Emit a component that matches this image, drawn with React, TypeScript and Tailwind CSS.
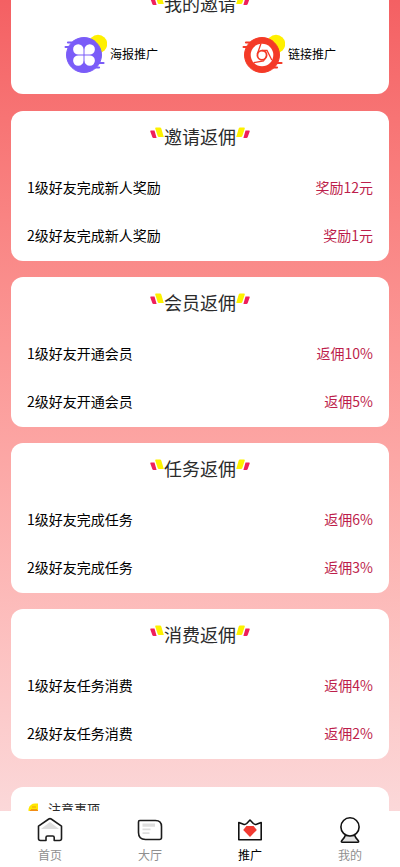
import type { ReactNode } from "react";

type Rate = { label: string; value: string };

const sections: { title: string; rates: Rate[] }[] = [
  {
    title: "邀请返佣",
    rates: [
      { label: "1级好友完成新人奖励", value: "奖励12元" },
      { label: "2级好友完成新人奖励", value: "奖励1元" },
    ],
  },
  {
    title: "会员返佣",
    rates: [
      { label: "1级好友开通会员", value: "返佣10%" },
      { label: "2级好友开通会员", value: "返佣5%" },
    ],
  },
  {
    title: "任务返佣",
    rates: [
      { label: "1级好友完成任务", value: "返佣6%" },
      { label: "2级好友完成任务", value: "返佣3%" },
    ],
  },
  {
    title: "消费返佣",
    rates: [
      { label: "1级好友任务消费", value: "返佣4%" },
      { label: "2级好友任务消费", value: "返佣2%" },
    ],
  },
];

function LeftMark() {
  return (
    <svg width="14" height="20" viewBox="0 0 14 20" aria-hidden="true">
      <path d="M1 4.5H4.5L6.6 12H3.6Q2.6 12 2.3 11L.3 5.5Q0 4.5 1 4.5Z" fill="#ef1f5c" />
      <path d="M6 1.5H10Q11 1.5 11.3 2.5L13.8 11H9Q8 11 7.7 10L5.2 2.5Q5 1.5 6 1.5Z" fill="#fdf100" />
    </svg>
  );
}

function RightMark() {
  return (
    <svg width="14" height="20" viewBox="0 0 14 20" aria-hidden="true">
      <path d="M13 4.5H9.5L7.4 12H10.4Q11.4 12 11.7 11L13.7 5.5Q14 4.5 13 4.5Z" fill="#ef1f5c" />
      <path d="M8 1.5H4Q3 1.5 2.7 2.5L.2 11H5Q6 11 6.3 10L8.8 2.5Q9 1.5 8 1.5Z" fill="#fdf100" />
    </svg>
  );
}

function CardTitle({ children }: { children: string }) {
  return (
    <div className="flex h-[52px] items-center justify-center pb-0.5">
      <LeftMark />
      <h2 className="text-[18px] leading-5 text-[#2b2b2b]">{children}</h2>
      <RightMark />
    </div>
  );
}

function SpeedLines() {
  return (
    <>
      <path d="M4 8.5H12M1.6 13H10" strokeWidth="2.2" strokeLinecap="round" />
      <path d="M31 29H39.5M29 33.5H35" strokeWidth="2.2" strokeLinecap="round" />
    </>
  );
}

function PosterIcon() {
  return (
    <svg width="43" height="40" viewBox="0 0 43 40" aria-hidden="true">
      <circle cx="34" cy="10" r="9.2" fill="#fff000" />
      <g fill="#7a5cf8" stroke="#7a5cf8">
        <circle cx="20" cy="21" r="17.5" />
        <SpeedLines />
      </g>
      <g fill="#fff">
        <path d="M19.5 20.5H15A5.2 5.2 0 1 1 19.5 15.5Z" />
        <path d="M20.5 20.5H25A5.2 5.2 0 1 0 20.5 15.5Z" />
        <path d="M19.5 21.5H15A5.2 5.2 0 1 0 19.5 26.5Z" />
        <path d="M20.5 21.5H25A5.2 5.2 0 1 1 20.5 26.5Z" />
      </g>
    </svg>
  );
}

function LinkIcon() {
  return (
    <svg width="43" height="40" viewBox="0 0 43 40" aria-hidden="true">
      <circle cx="34" cy="10" r="9.2" fill="#fff000" />
      <g fill="#f43a27" stroke="#f43a27">
        <circle cx="20" cy="21" r="17.5" />
        <SpeedLines />
      </g>
      <circle cx="20" cy="21" r="11.3" fill="#fff" />
      <g fill="none" stroke="#f43a27">
        <circle cx="20" cy="21.2" r="4.6" strokeWidth="1.8" />
        <path d="M19 9.5L15.3 20M20 16.5H25L29.8 26M11.8 28.6L21.5 27L24.3 22.5" strokeWidth="1.3" />
      </g>
    </svg>
  );
}

function HomeIcon() {
  return (
    <svg width="26" height="26" viewBox="0 0 26 26" fill="none" aria-hidden="true">
      <path d="M4 12L13 5L22 12Z" fill="#dedede" />
      <path
        d="M1.5 9.2L11.8 2Q13 1.2 14.2 2L24.5 9.2V21.5Q24.5 23.5 22.5 23.5H17.2V20.5Q17.2 19 15.7 19H10.5Q9 19 9 20.5V23.5H3.5Q1.5 23.5 1.5 21.5Z"
        stroke="#1c1c1c"
        strokeWidth="1.6"
        strokeLinejoin="round"
      />
    </svg>
  );
}

function HallIcon() {
  return (
    <svg width="26" height="26" viewBox="0 0 26 26" fill="none" aria-hidden="true">
      <path d="M5.5 6.5H18V9.7H5.5ZM5.5 11.5H13.5V13.3H5.5ZM5.5 15.3H12.5V17.1H5.5Z" fill="#dedede" />
      <path
        d="M2.8 3.5H18.5Q24.5 3.5 24.5 9.5V20.5Q24.5 22.5 22.5 22.5H8.5Q1.5 22.5 1.5 15.5V5Q1.5 3.5 2.8 3.5Z"
        stroke="#1c1c1c"
        strokeWidth="1.6"
      />
    </svg>
  );
}

function PromoteIcon() {
  return (
    <svg width="26" height="26" viewBox="0 0 26 26" fill="none" aria-hidden="true">
      <path
        d="M1.8 22.8V5.5L6.5 7.3Q8.3 7.8 9.7 6.5L13 3L16.3 6.5Q17.7 7.8 19.5 7.3L24.2 5.5V22.8Z"
        stroke="#111"
        strokeWidth="1.6"
        strokeLinejoin="round"
      />
      <path d="M9.4 9H16.6L19.8 13L13 20L6.2 13Z" fill="#f13a32" />
    </svg>
  );
}

function MineIcon() {
  return (
    <svg width="26" height="26" viewBox="0 0 26 26" fill="none" aria-hidden="true">
      <path
        d="M8.2 18.5H17.8Q18.4 21 21 23.3Q22.5 25.2 20.5 25.2H5.5Q3.5 25.2 5 23.3Q7.6 21 8.2 18.5Z"
        fill="#e2e2e2"
        stroke="#111"
        strokeWidth="1.6"
        strokeLinejoin="round"
      />
      <circle cx="13" cy="9.9" r="9.1" fill="#fff" stroke="#111" strokeWidth="1.6" />
    </svg>
  );
}

const tabs: { label: string; icon: ReactNode; active?: boolean }[] = [
  { label: "首页", icon: <HomeIcon /> },
  { label: "大厅", icon: <HallIcon /> },
  { label: "推广", icon: <PromoteIcon />, active: true },
  { label: "我的", icon: <MineIcon /> },
];

export default function App() {
  return (
    <div className="flex h-screen flex-col bg-white font-['Noto_Sans_CJK_SC',sans-serif]">
      <main className="min-h-0 flex-1 overflow-hidden bg-linear-to-b from-[#f46063] to-[#fbd8d9] px-[11px]">
        <div className="-mt-[22px] flex flex-col gap-4">
          <section className="mb-px rounded-xl bg-white px-[11px] pb-4">
            <CardTitle>我的邀请</CardTitle>
            <div className="grid h-12 grid-cols-2">
              <button className="flex items-center justify-center gap-[3px] text-xs text-black">
                <PosterIcon />
                海报推广
              </button>
              <button className="flex items-center justify-center gap-[3px] text-xs text-black">
                <LinkIcon />
                链接推广
              </button>
            </div>
          </section>

          {sections.map((section) => (
            <section key={section.title} className="rounded-xl bg-white px-4 pb-0.5">
              <CardTitle>{section.title}</CardTitle>
              {section.rates.map((rate) => (
                <div key={rate.label} className="flex h-12 items-center justify-between text-sm">
                  <span className="text-black">{rate.label}</span>
                  <span className="text-[#bd1e4b]">{rate.value}</span>
                </div>
              ))}
            </section>
          ))}

          <section className="mt-3 h-40 rounded-xl bg-white px-4 pt-3">
            <div className="flex items-center gap-2">
              <svg width="13" height="16" viewBox="0 0 13 16" aria-hidden="true">
                <path d="M1.5 12V8Q3 2.5 8 2.5H11V12Z" fill="#ffe600" />
                <path d="M5 6H9M4 8.5H10" stroke="#f0a010" />
                <path d="M3 9.5H11V15H3Z" fill="#e5352b" />
              </svg>
              <h2 className="text-[13px] leading-5 text-[#2b2b2b]">注意事项</h2>
            </div>
          </section>
        </div>
      </main>

      <nav className="grid h-14 shrink-0 grid-cols-4 bg-white">
        {tabs.map((tab) => (
          <button
            key={tab.label}
            className={`flex flex-col items-center gap-1 pt-1.5 text-xs leading-4 ${tab.active ? "text-black" : "text-[#8f8f8f]"}`}
          >
            {tab.icon}
            {tab.label}
          </button>
        ))}
      </nav>
    </div>
  );
}
